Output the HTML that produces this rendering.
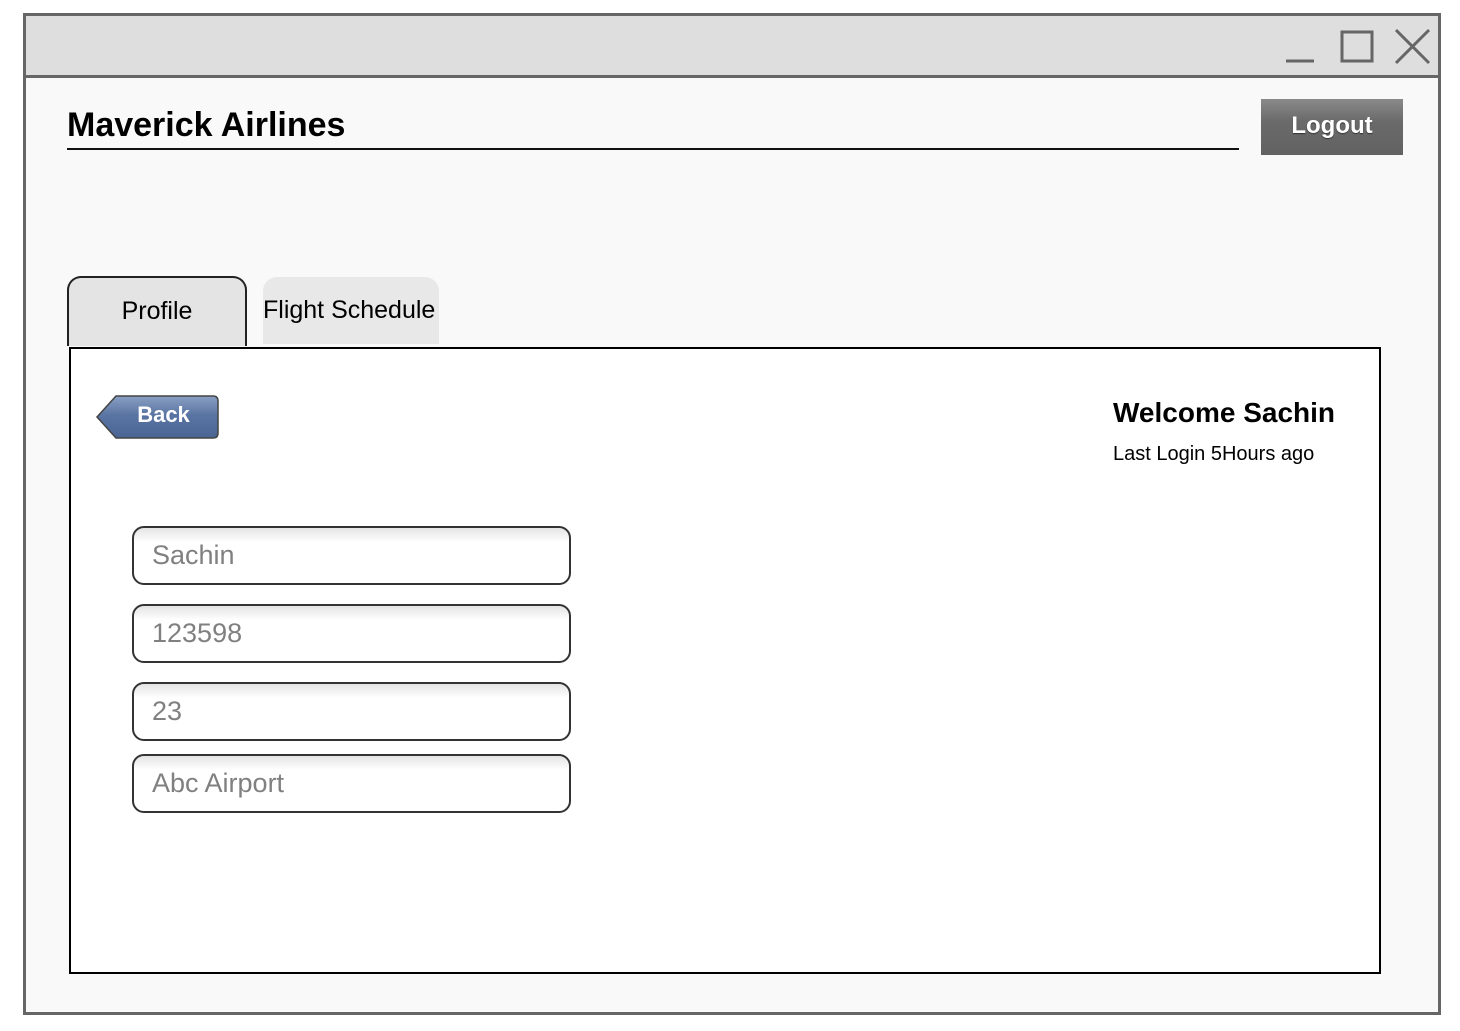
<!DOCTYPE html>
<html><head><meta charset="utf-8"><style>
*{margin:0;padding:0;box-sizing:border-box}
body{width:1460px;height:1031px;background:#fff;position:relative;font-family:"Liberation Sans",sans-serif;overflow:hidden}
.abs{position:absolute}
.win{left:23px;top:13px;width:1418px;height:1002px;border:3px solid #666;background:#f9f9f9}
.title{left:26px;top:16px;width:1412px;height:62px;background:#dedede;border-bottom:3px solid #666}
.inp{left:132px;width:439px;height:59px;border:2px solid #333;border-radius:12px;background:linear-gradient(#e4e4e4,#fff 14px,#fff);font-size:27px;color:#808080;padding-left:18px;line-height:55px}
</style></head><body>
<div class="abs win"></div>
<div class="abs title"></div>
<svg class="abs" style="left:1280px;top:25px" width="160" height="45">
<line x1="6" y1="36" x2="34" y2="36" stroke="#666" stroke-width="3"/>
<rect x="62" y="7" width="30" height="29" fill="none" stroke="#666" stroke-width="3"/>
<line x1="116" y1="5" x2="149" y2="38" stroke="#666" stroke-width="3"/>
<line x1="149" y1="5" x2="116" y2="38" stroke="#666" stroke-width="3"/>
</svg>
<div class="abs" style="left:67px;top:106px;font-size:34px;font-weight:bold;color:#000">Maverick Airlines</div>
<div class="abs" style="left:67px;top:148px;width:1172px;height:2px;background:#111"></div>
<div class="abs" style="left:1261px;top:99px;width:142px;height:56px;background:linear-gradient(#8a8a8a,#6a6a6a 40%,#626262);color:#fff;font-weight:bold;font-size:24px;text-align:center;line-height:54px;text-shadow:0 1px 1px #333">Logout</div>
<div class="abs" style="left:67px;top:276px;width:180px;height:70px;background:#e4e4e4;border:2px solid #222;border-bottom:none;border-radius:14px 14px 0 0;font-size:25px;text-align:center;line-height:66px">Profile</div>
<div class="abs" style="left:263px;top:277px;width:176px;height:67px;background:#e8e8e8;border-radius:14px 14px 0 0;font-size:25px;line-height:66px;white-space:nowrap">Flight Schedule</div>
<div class="abs" style="left:69px;top:347px;width:1312px;height:627px;background:#fff;border:2px solid #000"></div>
<svg class="abs" style="left:95px;top:393px" width="126" height="50">
<defs><linearGradient id="g" x1="0" y1="0" x2="0" y2="1"><stop offset="0" stop-color="#8aa0c4"/><stop offset=".45" stop-color="#5a75a3"/><stop offset="1" stop-color="#4a6594"/></linearGradient></defs>
<path d="M2 24 L21 3 H118 Q123 3 123 8 V40 Q123 45 118 45 H21 Z" fill="url(#g)" stroke="#444" stroke-width="1.5"/>
</svg>
<div class="abs" style="left:116px;top:402px;width:95px;text-align:center;color:#fff;font-weight:bold;font-size:22px">Back</div>
<div class="abs" style="left:1113px;top:397px;font-size:28px;font-weight:bold">Welcome Sachin</div>
<div class="abs" style="left:1113px;top:443px;font-size:20px">Last Login 5Hours ago</div>
<div class="abs inp" style="top:526px">Sachin</div>
<div class="abs inp" style="top:604px">123598</div>
<div class="abs inp" style="top:682px">23</div>
<div class="abs inp" style="top:754px">Abc Airport</div>
</body></html>
